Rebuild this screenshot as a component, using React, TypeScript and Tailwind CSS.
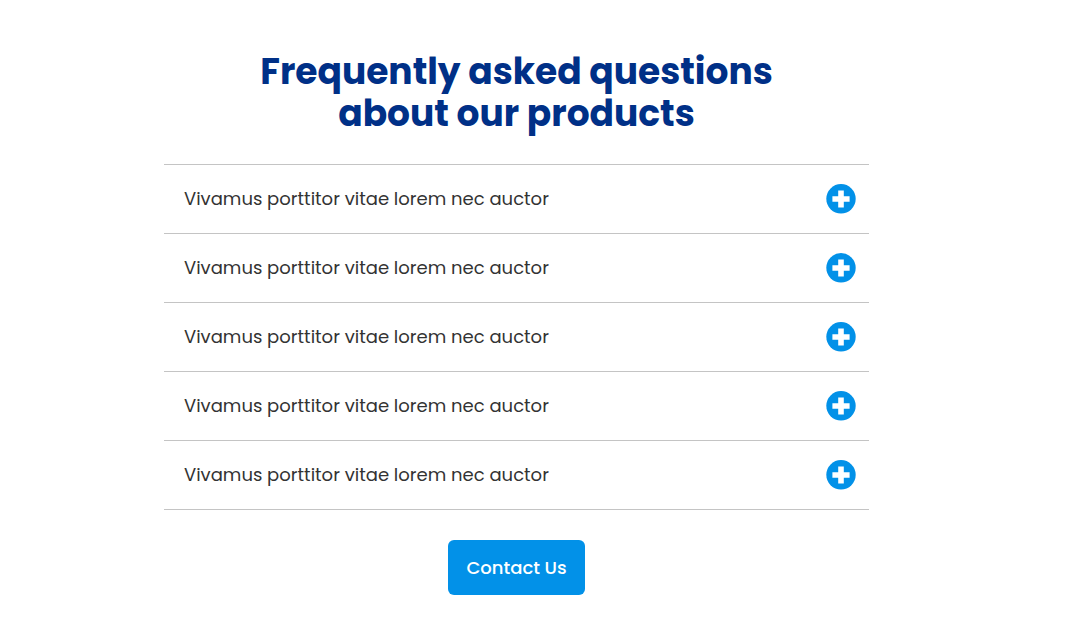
import { useState } from "react";

type Faq = {
  id: number;
  question: string;
};

const faqs: Faq[] = [
  { id: 1, question: "Vivamus porttitor vitae lorem nec auctor" },
  { id: 2, question: "Vivamus porttitor vitae lorem nec auctor" },
  { id: 3, question: "Vivamus porttitor vitae lorem nec auctor" },
  { id: 4, question: "Vivamus porttitor vitae lorem nec auctor" },
  { id: 5, question: "Vivamus porttitor vitae lorem nec auctor" },
];

function ToggleIcon({ open }: { open: boolean }) {
  return (
    <svg viewBox="0 0 30 30" className="size-[30px] shrink-0" aria-hidden="true">
      <circle cx="15" cy="14.8" r="14.7" fill="#0291e8" />
      <path
        d={open ? "M6.5 12.2h17v5.6h-17z" : "M12.2 6.4h5.6v5.8h5.8v5.6h-5.8v5.8h-5.6v-5.8H6.4v-5.6h5.8z"}
        fill="#fff"
      />
    </svg>
  );
}

export default function App() {
  const [openId, setOpenId] = useState<number | null>(null);

  return (
    <main className="min-h-screen bg-white pt-[51px] pr-[211px] pb-[30px] pl-[164px] font-[Poppins,Inter,sans-serif]">
      <h1 className="text-center text-4xl leading-[42px] font-bold text-[#003087]">
        Frequently asked questions
        <br />
        about our products
      </h1>
      {/* questions */}
      <ul className="mt-[29px] border-t border-[#c4c4c4]">
        {faqs.map((item) => (
          <li key={item.id} className="border-b border-[#c4c4c4]">
            <button
              type="button"
              aria-expanded={openId === item.id}
              onClick={() => setOpenId(openId === item.id ? null : item.id)}
              className="flex h-[68px] w-full cursor-pointer items-center justify-between pr-[13px] pl-5 text-left text-lg font-normal text-[#333333]"
            >
              {item.question}
              <ToggleIcon open={openId === item.id} />
            </button>
          </li>
        ))}
      </ul>
      <div className="mt-[30px] flex justify-center">
        <a
          href="#contact"
          className="rounded-md bg-[#0291e8] px-[18px] py-[14px] text-lg leading-[27px] font-medium text-white"
        >
          Contact Us
        </a>
      </div>
    </main>
  );
}
